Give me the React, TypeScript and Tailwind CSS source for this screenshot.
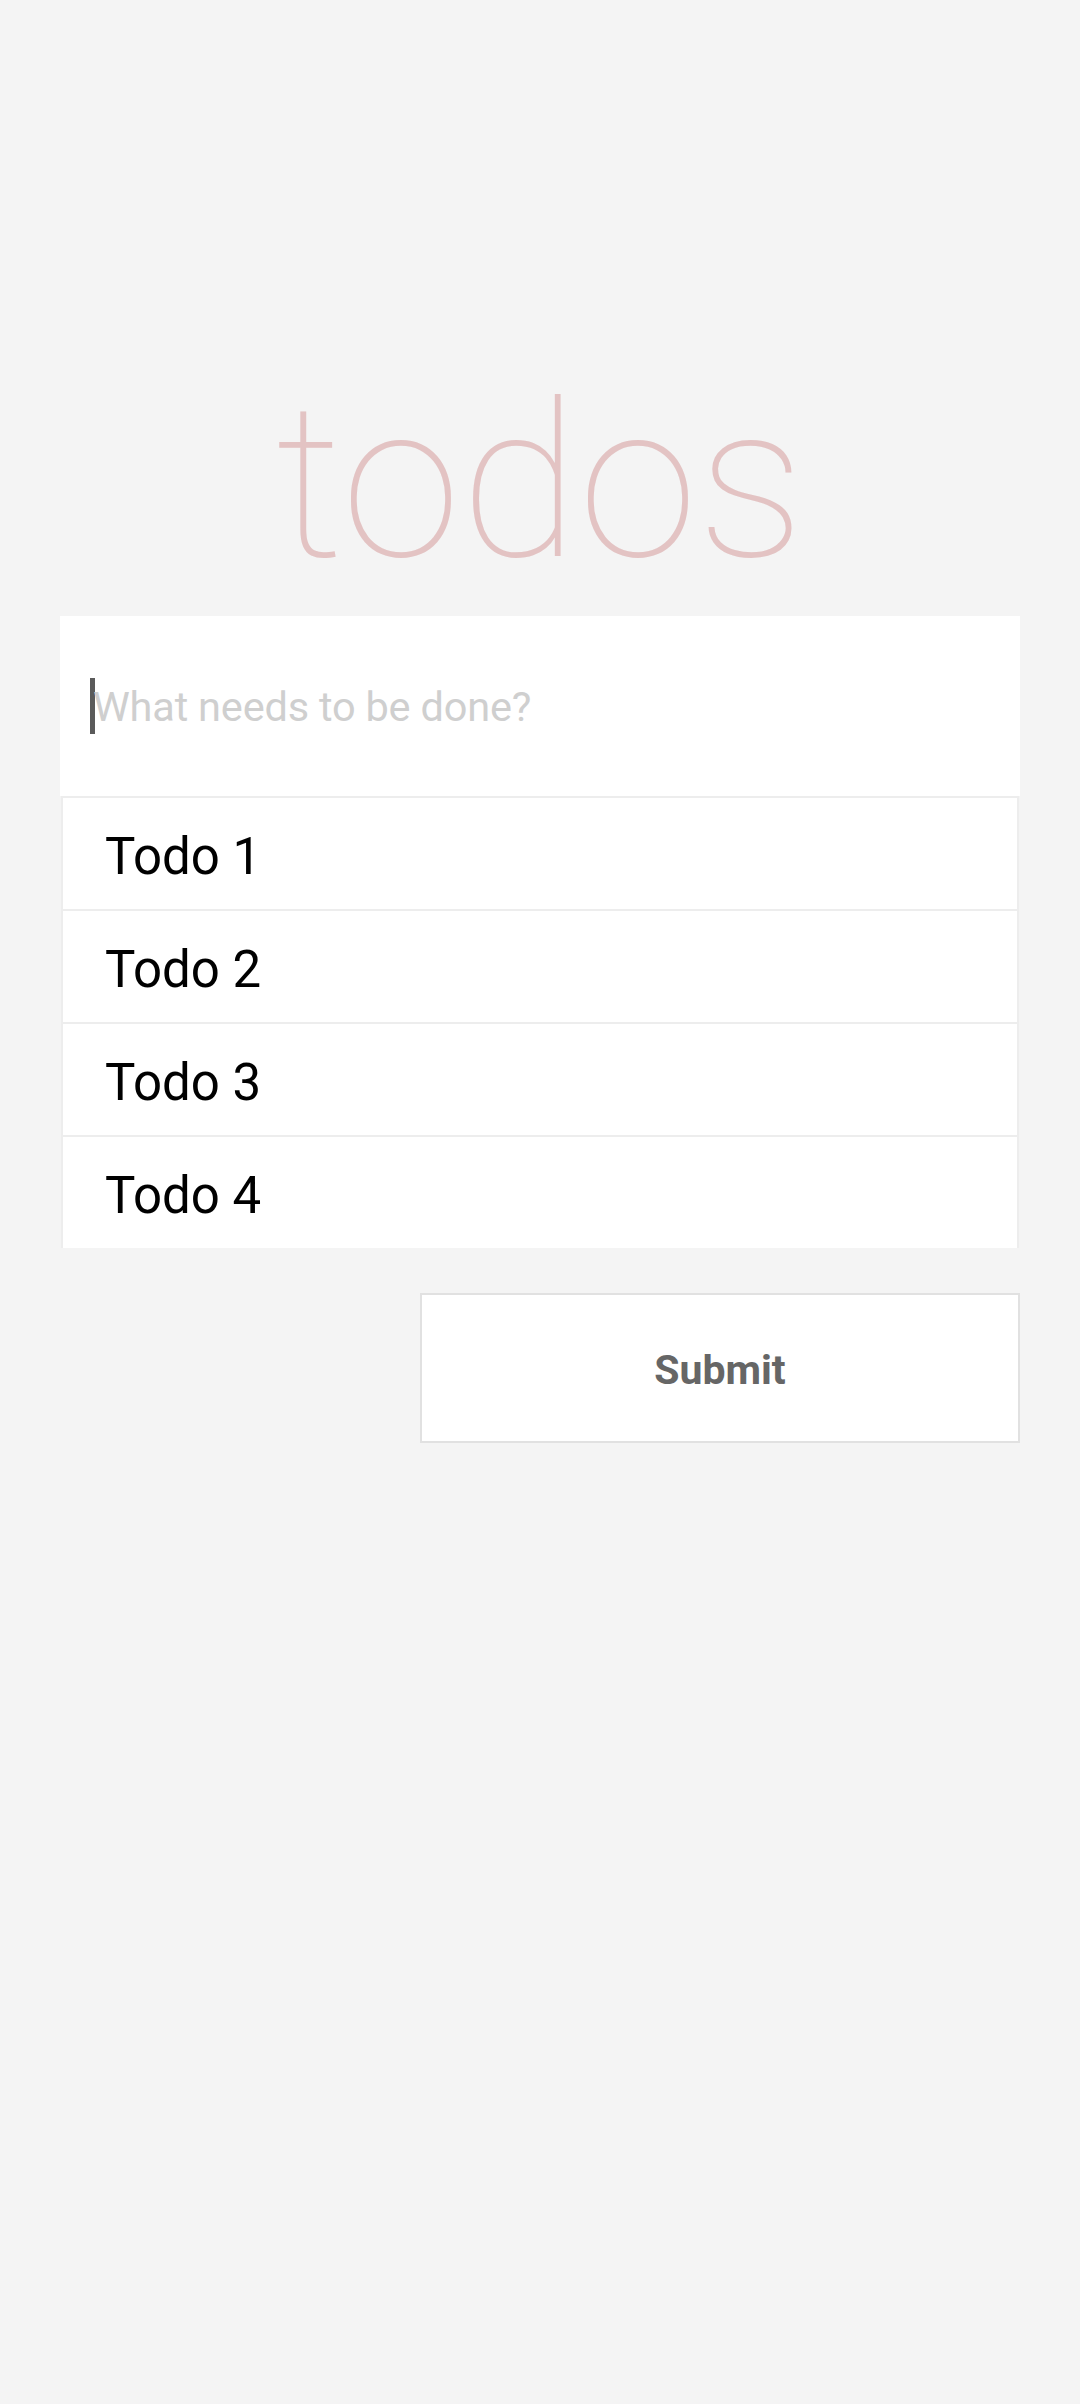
import React from 'react';

const TODOS = ['Todo 1', 'Todo 2', 'Todo 3', 'Todo 4'];

const App: React.FC = () => {
  return (
    <div className="min-h-screen bg-[#f4f4f4] font-['Roboto','Liberation_Sans',sans-serif]">
      <div className="w-[960px] mx-auto pt-[375px]">
        <h1 className="text-center text-[216px] leading-none font-thin text-[#e3c3c3]">
          todos
        </h1>

        <div className="mt-[25px] h-[180px] bg-white flex items-center pl-[30px]">
          <div className="w-[5px] h-[56px] bg-[#5a5a5a] shrink-0"></div>
          <span className="-ml-[2px] pt-[3px] text-[41.5px] tracking-[-0.2px] font-normal text-[#cfcfcf]">What needs to be done?</span>
        </div>

        <ul className="mx-px">
          {TODOS.map((todo) => (
            <li
              key={todo}
              className="h-[113px] bg-white border-t-2 border-x-2 border-[#ededed] flex items-center pl-[42px] pt-[8px] text-[51px] text-black"
            >
              {todo}
            </li>
          ))}
        </ul>

        <div className="flex justify-end mt-[45px]">
          <button className="w-[600px] h-[150px] bg-white border-2 border-[#e1e1e1] pt-[6px] text-[41px] font-bold text-[#666666]">
            Submit
          </button>
        </div>
      </div>
    </div>
  );
};

export default App;
